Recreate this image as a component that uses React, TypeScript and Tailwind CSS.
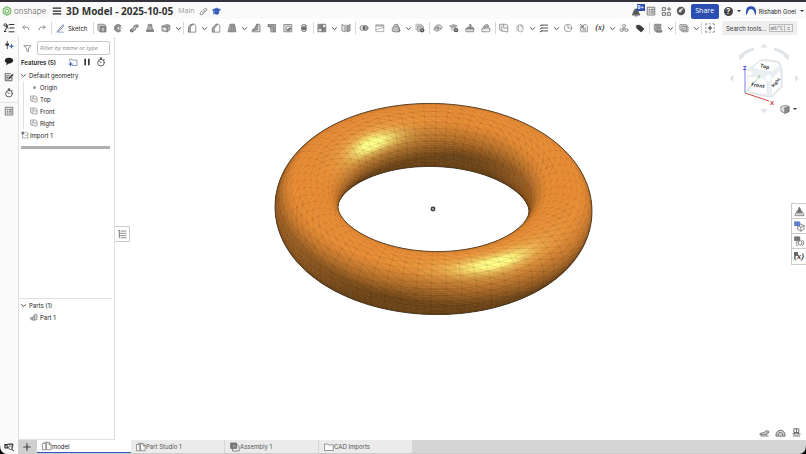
import React from "react";
import type { ReactNode } from "react";

/* ---------- icons ---------- */

type IconProps = { children: ReactNode; size?: string };

function Icon({ children, size = "size-3" }: IconProps) {
  return (
    <svg viewBox="0 0 12 12" className={`${size} shrink-0`} fill="none" stroke="#737373" strokeWidth="0.9" strokeLinejoin="round" strokeLinecap="round" aria-hidden="true">
      {children}
    </svg>
  );
}

const G = "#b4b4b4";

const icons: Record<string, ReactNode> = {
  undo: <path d="M4.2 3 2.2 5l2 2M2.4 5H7q2.5 0 2.5 3.2" stroke="#8a8a8a" strokeWidth="1.1" />,
  redo: <path d="M7.8 3l2 2-2 2M9.600 5H5Q2.500 5 2.500 8.200" stroke="#8a8a8a" strokeWidth="1.1" />,
  pencil: (
    <>
      <path d="M2.500 8.800 8.300 2l1.300 1.200L4 9.500l-2 .6z" stroke="#55657f" />
      <path d="M1.500 11h8" stroke="#7b94c9" />
    </>
  ),
  extrude: (
    <>
      <path d="M1.500 1.500h7.500l1.800 1.800v7.500H3.500L1.500 9z" fill="#d5d5d5" />
      <path d="M4 4h6.200v6.200H4z" fill="#8b8b8b" />
      <path d="M6 6h2.500v4H6z" fill="#bdbdbd" stroke="none" />
    </>
  ),
  revolve: (
    <>
      <path d="M9.500 3.200A4.500 4.500 0 1 0 9.500 9.200L7.500 7.400a1.700 1.700 0 1 1 0-2.400z" fill="#9a9a9a" />
      <path d="M4.500 3.500a3.400 3.400 0 0 0 0 5M7.500 6.200h2.700" />
    </>
  ),
  sweep: (
    <>
      <path d="M1.500 9.200c0-3.400 4-1.400 4-4 0-3.200 3-3 5-2.800v2.600c-2.500-.2-2 .2-2.200 1.800-.4 2.800-3.600 1.600-3.800 3.400z" fill={G} />
      <ellipse cx="3" cy="9.600" rx="1.700" ry="1.200" fill="#8a8a8a" />
      <ellipse cx="9.800" cy="3.600" rx="1" ry="1.400" fill="#ddd" />
    </>
  ),
  loft: (
    <>
      <path d="M4 2.500h4c0 3 .8 4.500 2.200 6.500H1.800C3.200 7 4 5.500 4 2.500z" fill={G} />
      <ellipse cx="6" cy="2.500" rx="2" ry="1" fill="#ddd" />
      <path d="M1.800 9v1.200h8.400V9z" fill="#888" />
    </>
  ),
  thicken: (
    <>
      <path d="M1.500 3.800 7 1.800 10.500 2.800v5.500L7.500 10.500l-6-1z" fill={G} />
      <path d="M1.500 3.800l6 1v5.700M7.500 4.800 10.500 2.800" />
      <path d="M3 5.800l3 .5v2.500l-3-.5z" fill="#eee" stroke="none" />
    </>
  ),
  fillet: (
    <>
      <path d="M2 10.500V6.500C2 4 3.500 1.500 6.500 1.500H9.200l1.300 1.300v7.700z" fill="#fff" />
      <path d="M2 6.500C2 4 3.500 1.500 6.500 1.500H8C5 2.600 4 4.500 4 7v3.500H2z" fill={G} />
    </>
  ),
  chamfer: (
    <>
      <path d="M2 10.500V6l4-4.500h3.200l1.300 1.300v7.700z" fill="#fff" />
      <path d="M2 6l4-4.500h2L4 6.500v4H2z" fill={G} />
    </>
  ),
  draft: (
    <>
      <path d="M4 1.500h5L10.800 10.500H1.500z" fill="#9c9c9c" />
      <path d="M5.800 1.500 4.500 10.500M7.800 1.500l.2 9" stroke="#858585" />
    </>
  ),
  rib: (
    <>
      <path d="M7.500 1.500h2.500l.8 1v8H1.500V8l3.500-1z" fill="#d5d5d5" />
      <path d="M7.500 1.500v6.500L2.500 9z" fill="#999" />
    </>
  ),
  shell: (
    <>
      <path d="M1.800 1.800h8.400v8.700H7.500V4.500H1.800z" fill="#a5a5a5" />
      <path d="M1.800 1.800v2.700h3.200v6h5.200" />
      <path d="M5 4.500h2.500v6H5z" fill="#ececec" />
      <path d="M5 6.500h2.500M5 8.500h2.500" />
    </>
  ),
  hole: (
    <>
      <path d="M1.500 1.800h9v8.700h-9z" fill="#dcdcdc" />
      <circle cx="6.300" cy="6.500" r="2.800" fill="#f5f5f5" />
      <path d="M4.300 8.500A2.800 2.800 0 0 0 9 5.800L6.300 6.300z" fill="#777" stroke="none" />
    </>
  ),
  thread: (
    <>
      <path d="M3.500 3v6.500c0 1.200 5 1.200 5 0V3z" fill="#d2d2d2" />
      <ellipse cx="6" cy="3" rx="2.500" ry="1.200" fill="#eee" />
      <path d="M3.500 5.300h5v2.600h-5z" fill="#666" />
    </>
  ),
  pattern: (
    <>
      <path d="M1.500 1.500h9v9h-9z" fill="#8a8a8a" />
      <path d="M6.800 2h3.200v3.500H6.800zM2 6.700h3.700V10H2z" fill="#e2e2e2" stroke="none" />
      <path d="M6.200 1.500v9M1.500 6.200h9" stroke="#666" />
    </>
  ),
  mirror: (
    <>
      <path d="M1.500 2 4.800 3.500v7L1.500 9.500z" fill="#e5e5e5" />
      <path d="M10.500 2 7.200 3.500v7l3.300-1z" fill="#a0a0a0" />
      <path d="M6 1.500v9" stroke="#999" />
    </>
  ),
  boolean: (
    <>
      <circle cx="4.200" cy="6" r="3" fill="#e2e2e2" />
      <circle cx="7.800" cy="6" r="3" fill="#a5a5a5" />
      <path d="M6 3.700a3 3 0 0 1 0 4.600 3 3 0 0 1 0-4.600z" fill="#555" />
    </>
  ),
  split: (
    <>
      <path d="M1.500 2.500h9v7.800h-9z" fill="#fff" stroke="#9b9b9b" />
      <path d="M1.500 2.500h9v1.200h-9z" fill="#d5d5d5" stroke="#9b9b9b" />
      <path d="M1.500 8 10.500 5" stroke="#999" strokeDasharray="1.200 1" />
    </>
  ),
  transform: (
    <>
      <path d="M2 5.500 6 3.800l4 1.200v4.800l-3.500 1L2 10z" fill="#c2c2c2" />
      <path d="M3 4c.5-2 3-3 4-1.800M8.500 1.500 7 2.600l1.600 1.200M9 7l1.800 2-1.500 2" stroke="#555" />
    </>
  ),
  deletePart: (
    <>
      <path d="M1.500 1.500h6.500v6.500H1.500z" fill="#d5d5d5" stroke="#aaa" />
      <path d="M3.500 3.500h6.500v6.500H3.500z" fill="#c0c0c0" stroke="#999" />
      <circle cx="8.700" cy="8.800" r="2.500" fill="#444" stroke="none" />
      <path d="M7.900 8l1.600 1.600M9.500 8 7.900 9.600" stroke="#fff" strokeWidth=".7" />
    </>
  ),
  modifyFillet: (
    <>
      <path d="M1 7.500C1.500 4 3.800 2 6.500 2S11 3.800 11 6L7.500 7 5 10z" fill="#cecece" stroke="#999" />
      <path d="M2.500 8.500V6.500L5.500 4M6 9.500v-4M5 6.500l1-1.300 1 1.300M8 9l2-2.500" />
    </>
  ),
  deleteFace: (
    <>
      <path d="M1 3.500 5.500 1.800l4.500 1.700L6.500 6z" fill="#a8a8a8" stroke="#999" />
      <path d="M3 5l3.500 1.200V10L3 8z" fill="#d8d8d8" stroke="#aaa" />
      <circle cx="8.500" cy="8.600" r="2.500" fill="#444" stroke="none" />
      <path d="M7.700 7.800l1.600 1.600M9.300 7.800 7.700 9.400" stroke="#fff" strokeWidth=".7" />
    </>
  ),
  moveFace: (
    <>
      <path d="M1.500 6.800h9v3.700h-9z" fill="#e2e2e2" />
      <path d="M1.500 6.800 4 4.800h5l1.500 2z" fill="#999" />
      <path d="M6.300 5.500V1.800M5 3 6.300 1.500 7.600 3" stroke="#555" />
    </>
  ),
  replaceFace: (
    <>
      <path d="M1.500 7h9v3.500h-9z" fill="#fff" />
      <path d="M1.500 7 4 5h5l1.500 2M3 4.500C4 2 7 1.500 8.500 2.300L9 4.500C7 3.500 5.500 4 4.500 5.500z" fill="#cdcdcd" />
    </>
  ),
  plane: (
    <>
      <path d="M1.200 1.500h7.300l2 1.800v7.500l-7.300-1.300-2-1z" fill="#f4f4f4" stroke="#808080" />
      <path d="M5.500 1.500v4.500h5M3.300 3.500v6" stroke="#8a8a8a" />
    </>
  ),
  helix: (
    <>
      <path d="M4 3.500v6c0 1.400 5.500 1.400 5.500 0V4L7.800 2.200H5.500C4.500 2.200 4 2.600 4 3.500z" fill="#f5f5f5" stroke="#999" />
      <path d="M2.500 4v5.500M7.500 2.500v2H9" stroke="#999" />
    </>
  ),
  curve: <path d="M3.500 2.500h7M3.500 6h7M3.500 9.500h7M1.500 3.500 3.500 2.500M1.500 7l2-1M1.500 10.500l2-1" stroke="#555" strokeWidth="1.200" />,
  clock: (
    <>
      <circle cx="6" cy="6" r="4.500" fill="#f8f8f8" stroke="#888" />
      <path d="M6 3V6.200h2.700" stroke="#888" />
    </>
  ),
  importPart: (
    <>
      <path d="M2 4.500v6h8.300V3.800L8.300 1.800H6.500" fill="#f2f2f2" stroke="#888" />
      <path d="M1.500 1.500 5 4.800M5 2.500v2.500H2.500" stroke="#444" />
      <path d="M5 6.200h3v2.500H5z" fill="#d5d5d5" stroke="#999" />
    </>
  ),
  composite: (
    <>
      <circle cx="6" cy="3.200" r="1.800" fill="#f2f2f2" stroke="#888" />
      <circle cx="3.200" cy="8.500" r="2" fill="#e2e2e2" stroke="#888" />
      <circle cx="8.800" cy="8.500" r="2" fill="#e2e2e2" stroke="#888" />
      <path d="M6 5v2M6 6.500 4.800 7.200M6 6.500l1.200.7" stroke="#888" />
    </>
  ),
  tag: <path d="M2 2.800h3.800l5 4.200-3.300 3.800L2.300 6.500z" fill="#3c3c3c" stroke="#3c3c3c" />,
  frame: (
    <>
      <path d="M2 1.500h7.500v2.500H5v1.500h4.500v2H5V9h5v1.800H3.800L2 9z" fill="#a0a0a0" />
      <path d="M5 10.800h5.500V8.500" />
    </>
  ),
  sheet: (
    <>
      <path d="M1.500 2h7L10.800 4v6.500H4L1.500 8.500z" fill="#dedede" />
      <path d="M4 4h5v4.800H4zM5 7.800l3-2.800" />
    </>
  ),
  addCustom: (
    <>
      <path d="M1 3V1h2M5 1h2M9 1h2v2M11 5v2M11 9v2H9M7 11H5M3 11H1V9M1 7V5" stroke="#666" strokeLinecap="butt" />
      <path d="M6 4v4M4 6h4" stroke="#333" strokeWidth="1.300" />
    </>
  ),
  featureTree: (
    <>
      <circle cx="2.300" cy="3" r="1.300" stroke="#333" />
      <path d="M6.500 2.500H11M7 6h4M6 9.800h5M3.300 4 5.200 6.200M5 3 1.500 9.500M1.500 9.500h1.500" stroke="#333" strokeWidth="1" />
    </>
  ),
  insert: (
    <>
      <path d="M4 1.500v9M2.600 4.500h2.800v2H2.600z" stroke="#333" fill="#333" />
      <path d="M9 5.500v4M7 7.500h4" stroke="#2f57b5" strokeWidth="1.200" />
    </>
  ),
  comment: <path d="M6 2C3 2 1 3.500 1 5.500 1 7 2 8 3.200 8.500L2.500 11 6 9c3 0 5-1.500 5-3.500S9 2 6 2z" fill="#222" stroke="none" />,
  notes: (
    <>
      <path d="M9.500 6.500v4h-8v-8.500h6" stroke="#333" />
      <path d="M3 4.500h3.500M3 6.500h2M3 8.500h1.500" stroke="#333" />
      <path d="M5.500 8.500 6 6.800 10 2.500l1.200 1L7 8z" fill="#333" stroke="#333" strokeWidth=".5" />
    </>
  ),
  timer: (
    <>
      <circle cx="6" cy="6.800" r="4" stroke="#333" />
      <path d="M5 1.300h2M6 1.300v1.500M6 6.800 4.500 5.300M9.300 2.800l.8.800" stroke="#333" strokeWidth="1.100" />
    </>
  ),
  table: (
    <>
      <path d="M2 1.500h8.500v9.300H2z" stroke="#555" />
      <path d="M3.500 4h1M6 4h3M3.500 6.200h1M6 6.200h3M3.500 8.400h1M6 8.400h3" stroke="#555" strokeWidth="1.100" />
    </>
  ),
  binoculars: (
    <>
      <path d="M1 3h4l1-.5h4.500v2.500M1 3v4h3.500V5.500M2 4.500h2" fill="none" stroke="#333" strokeWidth="1.300" />
      <circle cx="7.800" cy="6.800" r="2.200" stroke="#333" />
      <path d="M9.500 8.500l1.800 2" stroke="#333" strokeWidth="1.300" />
    </>
  ),
  funnel: <path d="M1.500 2.200h9L7.200 6.300v4L4.800 9V6.300z" stroke="#666" />,
  folderPlus: (
    <>
      <path d="M2 5V2.800h3L6 3.800h4.800v6.400H5.500" stroke="#6d7f9f" />
      <path d="M3.200 6.500v4M1.200 8.500h4" stroke="#2f57b5" strokeWidth="1.200" />
    </>
  ),
  pause: <path d="M3.800 2v8M8.200 2v8" stroke="#333" strokeWidth="2" strokeLinecap="butt" />,
  part: (
    <>
      <path d="M1.500 7h3V4.500h2V2.500L8 1.500l2.500 1V10l-4 .8-5-.8z" fill="#cfcfcf" stroke="#777" />
      <path d="M6.500 4.500v6M1.500 7l2.500 1v2.500" stroke="#777" />
    </>
  ),
  studio: (
    <>
      <path d="M1 3h3.500v7.500H1zM5.800 2h3L11 4v6.500H5.800z" fill="#f6f6f6" stroke="#777" />
      <path d="M2.500 1.500h4M8.500 2v2.500H11" stroke="#777" />
    </>
  ),
  assembly: (
    <>
      <path d="M3.500 3.500H9L11 5.500v5.300H3.500z" fill="#eee" stroke="#666" />
      <path d="M1 1.200h7v6.500H1z" fill="#777" stroke="#666" />
      <path d="M3.500 3.500h3v3h-3z" fill="#999" stroke="none" />
    </>
  ),
  folder: <path d="M1 2.500h3.500L5.500 3.500h5.700v6.700H1z" stroke="#777" fill="#fafafa" />,
  appearance: (
    <>
      <path d="M6 1.500 8.500 7h-5z" fill="#666" />
      <path d="M3 6 1 10.500h10L9 6M3 8.500h6" stroke="#777" />
    </>
  ),
  display: (
    <>
      <path d="M7.500 3.500 11 5v4L7.500 11 4 9V5zM4 5l3.500 1.800L11 5M7.500 6.800V11" fill="#fff" stroke="#777" />
      <path d="M.8 1h5.500v4H.8z" fill="#5f82d0" stroke="#4a6fc2" />
    </>
  ),
  config: (
    <>
      <path d="M3.500 5.500C2.500 5.500 3 8 2 8c1 0 .5 2.800 1.500 2.800M9.500 4.500c1 0 .5 2.500 1.500 3-1 .2-.5 3-1.500 3M5 6l1.800-1L8.600 6v3L6.800 10 5 9z" stroke="#666" />
      <path d="M.8 1h5.500v3.800H.8z" fill="#777" stroke="#666" />
    </>
  ),
  listToggle: <path d="M2 2h1.500M5 2.500h5.800M5 5.200h5.800M5 8h5.800M5 10.500h5.800M2.800 2v8.500M2.800 5.200H4M2.800 8H4" stroke="#666" />,
  scale: <path d="M1.500 8.500h7v-2h2V4.500L8 4 5.500 6l-4 1zM2 9.800h8" fill="#ccc" stroke="#666" />,
  protractor: <path d="M1 9.500C1 5.800 3 3.500 6 3.500s5 2.300 5 6zM3.500 9C3.500 7 4.500 6 6 6s2.500 1 2.500 3" fill="#d5d5d5" stroke="#555" />,
  mass: <path d="M3.500 2h5v4h-5zM6 2v4M2 7.500h8M2.500 9.800h7M4 6v1.500M8 6v1.500" stroke="#555" />,
  chevron: <path d="M2.500 4.500 6 8 9.500 4.500" stroke="#444" strokeWidth="1.700" />,
  importRow: (
    <>
      <path d="M2.500 4.500v6h8V3.500l-1.800-1.500H6.500" fill="#fff" stroke="#777" />
      <path d="M1.500 1.500h3v3h-3z" fill="#777" stroke="#777" />
      <path d="M6 5.500l1.500 2L10 4" stroke="#999" />
    </>
  ),
};

/* ---------- torus mesh ---------- */

const CX = 433.5;
const CY = 209;
const MAJOR = 127;
const MINOR = 31.5;
const ELEV = 0.622;
const ROLL = 0.026;

type Vec = [number, number, number];

function rotate([x, y, z]: Vec): Vec {
  // y runs away from the eye in the ring's plane, z along the ring's axis
  const up = y * Math.sin(ELEV) + z * Math.cos(ELEV);
  const toward = z * Math.sin(ELEV) - y * Math.cos(ELEV);
  return [x * Math.cos(ROLL) + up * Math.sin(ROLL), up * Math.cos(ROLL) - x * Math.sin(ROLL), toward];
}

function normalAt(u: number, v: number): Vec {
  return rotate([Math.cos(u) * Math.cos(v), Math.sin(u) * Math.cos(v), Math.sin(v)]);
}

function pointAt(u: number, v: number): string {
  const d = MAJOR + MINOR * Math.cos(v);
  const [x, y] = rotate([d * Math.cos(u), d * Math.sin(u), MINOR * Math.sin(v)]);
  return `${(CX + x).toFixed(2)} ${(CY - y).toFixed(2)}`;
}

function wrap(a: number): number {
  return Math.atan2(Math.sin(a), Math.cos(a));
}

// surface parameters nearest to a screen position on the visible side
function locate(sx: number, sy: number): [number, number] {
  let best: [number, number] = [0, 0];
  let dist = 1e9;
  for (let i = 0; i < 180; i++) {
    for (let j = 0; j < 90; j++) {
      const u = (i / 180) * 2 * Math.PI;
      const v = (j / 90) * 2 * Math.PI;
      if (normalAt(u, v)[2] < 0) continue;
      const [px, py] = pointAt(u, v).split(" ").map(Number);
      const d = (px - sx) ** 2 + (py - sy) ** 2;
      if (d < dist) {
        dist = d;
        best = [u, v];
      }
    }
  }
  return best;
}

const glints = [locate(373, 143), locate(495, 262)];

function shade(u: number, v: number): string {
  const n = normalAt(u, v);
  const dot = (l: Vec) => Math.max(0, n[0] * l[0] + n[1] * l[1] + n[2] * l[2]);
  const k = Math.min(1, 1.02 * dot([0.46, 0.66, 0.59]) + 0.46 * dot([-0.8, 0.59, 0.1]));
  let spec = 0;
  for (const [gu, gv] of glints) {
    const du = wrap(u - gu);
    const dv = wrap(v - gv);
    spec += 0.9 * Math.exp(-((du / 0.27) ** 2) - (dv / 0.26) ** 2) + 0.25 * Math.exp(-((du / 0.5) ** 2) - (dv / 0.5) ** 2);
  }
  const base = [108 + 124 * k, 68 + 72 * k, 24 + 28 * k];
  const s = Math.min(1, spec);
  const c = [base[0] + (255 - base[0]) * s, base[1] + (254 - base[1]) * s, base[2] + (135 - base[2]) * s];
  return `rgb(${c.map(Math.round).join(",")})`;
}

function buildFaces() {
  const U = 144;
  const V = 80;
  const faces: { d: string; fill: string; z: number }[] = [];
  for (let i = 0; i < U; i++) {
    for (let j = 0; j < V; j++) {
      const u0 = (i / U) * 2 * Math.PI;
      const u1 = ((i + 1) / U) * 2 * Math.PI;
      const v0 = (j / V) * 2 * Math.PI;
      const v1 = ((j + 1) / V) * 2 * Math.PI;
      const um = (u0 + u1) / 2;
      const vm = (v0 + v1) / 2;
      const z = normalAt(um, vm)[2];
      if (z < -0.1) continue;
      faces.push({ d: `M${pointAt(u0, v0)}L${pointAt(u1, v0)}L${pointAt(u1, v1)}L${pointAt(u0, v1)}Z`, fill: shade(um, vm), z });
    }
  }
  return faces.sort((a, b) => a.z - b.z);
}

// mesh edges; those seen edge-on are kept apart so that they can be drawn fainter
function buildWires(): [string, string] {
  const U = 64;
  const V = 30;
  let facing = "";
  let grazing = "";
  for (let i = 0; i < U; i++) {
    for (let j = 0; j < V; j++) {
      const u0 = (i / U) * 2 * Math.PI;
      const u1 = ((i + 1) / U) * 2 * Math.PI;
      const v0 = (j / V) * 2 * Math.PI;
      const v1 = ((j + 1) / V) * 2 * Math.PI;
      const z = normalAt((u0 + u1) / 2, (v0 + v1) / 2)[2];
      if (z < 0) continue;
      const d = `M${pointAt(u1, v0)}L${pointAt(u0, v0)}L${pointAt(u0, v1)}L${pointAt(u1, v0)}`;
      if (z > 0.6) facing += d;
      else grazing += d;
    }
  }
  return [facing, grazing];
}

function buildRim(side: number): string {
  const pts: string[] = [];
  for (let i = 0; i < 240; i++) {
    const u = (i / 240) * 2 * Math.PI;
    // tube angle at which the normal is square to the eye
    const v = Math.atan2(Math.sin(u) * Math.cos(ELEV), Math.sin(ELEV)) + (side > 0 ? 0 : Math.PI);
    pts.push(pointAt(u, v));
  }
  return `M${pts.join("L")}Z`;
}

const faces = buildFaces();
const [facingWires, grazingWires] = buildWires();
const rims = buildRim(1) + buildRim(-1);

function Torus() {
  return (
    <svg viewBox="115 37 691 403" className="size-full" role="img" aria-label="Torus model">
      <clipPath id="torus-rim">
        <path d={rims} clipRule="evenodd" />
      </clipPath>
      <g clipPath="url(#torus-rim)">
        {faces.map((f, i) => (
          <path key={i} d={f.d} fill={f.fill} stroke={f.fill} strokeWidth="0.6" />
        ))}
        <path d={facingWires} fill="none" stroke="#3d2405" strokeOpacity="0.36" strokeWidth="0.3" />
        <path d={grazingWires} fill="none" stroke="#3d2405" strokeOpacity="0.2" strokeWidth="0.3" />
      </g>
      <path d={rims} fill="none" stroke="#4a4031" strokeWidth="0.9" />
      <circle cx="433" cy="209" r="1.900" fill="#999" stroke="#333" strokeWidth="1.100" />
    </svg>
  );
}

/* ---------- view cube ---------- */

function ViewCube() {
  return (
    <svg viewBox="728 42 72 74" className="h-[74px] w-[72px]" role="img" aria-label="View cube">
      <g fill="#dfe3e9">
        <path d="M764 43.500l3.500 4h-7zM764 113.500l-3.500-4.500h7zM729.500 78.500l4-3.500v7zM799 78.500l-4-3.500v7z" />
      </g>
      <path d="M741 56q5-5 13-7M774 49q8 2 13 7" stroke="#dfe3e9" strokeWidth="3" fill="none" />
      <path d="M738.500 54.500l1 5.500 5-3zM789.500 54.500l-1 5.500-5-3z" fill="#dfe3e9" />
      <path d="M748 70l13-10q12-1 19 3l2 6v18l-10 10q-14-1-23-5z" fill="#eceff3" stroke="#d5dae1" strokeWidth="0.800" strokeLinejoin="round" />
      <path d="M752 68l8-7q9-1 18 2l2 2-8 7q-10 0-20-4z" fill="#fff" stroke="#dde1e7" strokeWidth="0.600" />
      <path d="M748 76q10 0 19 4v15q-10-1-19-4z" fill="#fff" stroke="#dde1e7" strokeWidth="0.600" />
      <path d="M771.500 79l8.500-9 1 3v13l-9.500 10z" fill="#fff" stroke="#dde1e7" strokeWidth="0.600" />
      <circle cx="768.500" cy="78" r="3" fill="#fff" />
      <circle cx="749.500" cy="73" r="2.500" fill="#fff" />
      <path d="M745 93V70" stroke="#7d7de8" strokeWidth="1" />
      <path d="M745 93l24 8" stroke="#d24a4a" strokeWidth="1" />
      <path d="M745 93l14-16" stroke="#77c477" strokeWidth="0.600" />
      <g fontFamily="Open Sans, sans-serif" fontWeight="700" fill="#333" fontSize="5">
        <text x="760" y="68" transform="rotate(14 764 67)">Top</text>
        <text x="751" y="87" fontSize="5" transform="rotate(9 757 86)">Front</text>
        <text x="771" y="84" fontSize="4" transform="rotate(-50 776 83)">Right</text>
        <text x="743" y="69.500" fontSize="6" fill="#4040c8">Z</text>
        <text x="770" y="104.500" fontSize="6" fill="#d03c3c">X</text>
        <text x="758" y="78" fontSize="4" fontWeight="400" fill="#5cb85c">Y</text>
      </g>
    </svg>
  );
}

/* ---------- pieces ---------- */

function ToolButton({ name, label }: { name: string; label?: string }) {
  return (
    <button type="button" aria-label={label ?? name} className="flex h-4 w-4 shrink-0 items-center justify-center">
      <Icon size="size-[10px]">{icons[name]}</Icon>
    </button>
  );
}

function Chevron() {
  return (
    <button type="button" aria-label="More" className="flex h-4 w-2 shrink-0 items-center justify-center">
      <Icon size="size-[7px]">{icons.chevron}</Icon>
    </button>
  );
}

function Separator() {
  return (
    <span className="flex h-3 w-0.5 shrink-0 justify-center">
      <span className="h-3 w-px bg-[#d8d8d8]" />
    </span>
  );
}

const tools =
  "extrude revolve sweep loft thicken v | fillet v chamfer draft v rib shell hole thread | pattern v mirror | boolean split transform v deletePart | modifyFillet deleteFace moveFace replaceFace | plane helix v curve v clock importPart var v composite tag | frame v | sheet v | addCustom".split(" ");

function Toolbar() {
  return (
    <div role="toolbar" className="flex h-[18px] shrink-0 items-center">
      <ToolButton name="undo" />
      <ToolButton name="redo" />
      <Separator />
      <button type="button" className="flex w-10 shrink-0 items-center gap-0.5 pl-1 text-[6px] text-[#222]">
        <Icon size="size-[10px]">{icons.pencil}</Icon>
        Sketch
      </button>
      <Separator />
      {tools.map((t, i) => {
        if (t === "v") return <Chevron key={i} />;
        if (t === "|") return <Separator key={i} />;
        if (t === "var")
          return (
            <button key={i} type="button" className="w-4 shrink-0 text-center font-['Liberation_Serif',serif] text-[8px] font-bold italic text-[#444]">
              (x)
            </button>
          );
        return <ToolButton key={i} name={t} />;
      })}
      <button type="button" className="mr-[9px] ml-auto flex h-[14px] w-[75px] shrink-0 items-center bg-[#efefef] pl-1 text-[6px] whitespace-nowrap text-[#333]">
        Search tools...
        <span className="ml-0.5 flex h-2 items-center border border-[#bbb] px-px text-[5px] leading-none text-[#666]">alt/⌥</span>
        <span className="flex h-2 items-center border border-l-0 border-[#bbb] px-0.5 text-[5px] leading-none text-[#666]">c</span>
      </button>
    </div>
  );
}

function Header() {
  return (
    <header className="flex h-[17px] shrink-0 items-center bg-[#fafafa] pt-px">
      <div className="flex w-[49px] shrink-0 items-center gap-0.5 pl-0.5">
        <svg viewBox="0 0 12 12" className="size-[10px]" fill="none" stroke="#79b96a" strokeWidth="1.4" aria-hidden="true">
          <path d="M6 .9 10.500 3.500v5L6 11.100 1.500 8.500v-5z" />
          <path d="M6 3.500 8.200 4.800v2.500L6 8.500 3.800 7.300V4.800z" />
        </svg>
        <span className="text-[8px] font-light text-[#666]">onshape</span>
      </div>
      <button type="button" aria-label="Menu" className="flex w-4 shrink-0 justify-center">
        <Icon size="size-[10px]">
          <path d="M1.500 2.500h9M1.500 6h9M1.500 9.500h9" stroke="#222" strokeWidth="1.500" />
        </Icon>
      </button>
      <h1 className="pl-px font-['Open_Sans'] text-[10px] font-bold whitespace-nowrap text-[#333]">3D Model - 2025-10-05</h1>
      <span className="pl-[5px] font-['Open_Sans'] text-[7px] text-[#999]">Main</span>
      <button type="button" aria-label="Share link" className="ml-[5px]">
        <Icon size="size-[9px]">
          <path d="M5 7.500 8 4.500M5.500 4.200 7.500 2.200a1.700 1.700 0 0 1 2.400 2.400l-2 2M6.500 8l-2 2A1.700 1.700 0 0 1 2 7.500l2-2" stroke="#555" />
        </Icon>
      </button>
      <button type="button" aria-label="Learning center" className="ml-1">
        <Icon size="size-[9px]">
          <path d="M1 3.800 6 1.500l5.500 2L6.500 6zM3.500 5.500v3c1.500 1.500 4.500 1.500 5.500 0V5M2 4.500v5" fill="#2f57b5" stroke="#2f57b5" />
        </Icon>
      </button>
      <div className="ml-auto flex items-center">
        <button type="button" aria-label="Notifications" className="relative flex w-[15px] justify-center">
          <Icon size="size-[11px]">
            <path d="M1.500 9.500c1.500-1.500 1-5.500 4-6.500 3 1 2.500 5 4 6.500zM4.500 10.800h2" fill="#555" stroke="#555" />
          </Icon>
          <span className="absolute -top-0.5 left-2 h-[7px] w-2 bg-[#2a4fb0] text-center text-[5px] leading-[7px] font-bold text-white">9+</span>
        </button>
        <button type="button" aria-label="Release notes" className="flex w-[15px] justify-center">
          <Icon size="size-[10px]">{icons.table}</Icon>
        </button>
        <button type="button" aria-label="Apps" className="flex w-[15px] justify-center">
          <Icon size="size-[11px]">
            <path d="M1.800 1.800h3v3h-3zM1.800 7.200h3v3h-3zM7.200 7.200h3v3h-3zM8.700 1.300v4M6.700 3.300h4" stroke="#555" />
          </Icon>
        </button>
        <button type="button" aria-label="Community" className="flex w-[15px] justify-center">
          <Icon size="size-[10px]">
            <circle cx="6" cy="6" r="5" fill="#555" stroke="none" />
            <path d="M3 6.500c1.500-3.500 4-4 6-3.500-1 1.500-2 1.500-2.500 3.500L5 8z" fill="#ddd" stroke="none" />
          </Icon>
        </button>
        <button type="button" className="ml-0.5 h-[15px] w-7 rounded-xs bg-[#2a4fb0] font-['Open_Sans'] text-[7px] text-white">Share</button>
        <button type="button" aria-label="Help" className="ml-[5px] flex items-center gap-1">
          <span className="flex size-[9px] items-center justify-center rounded-full bg-[#444] text-[7px] leading-none font-bold text-white">?</span>
          <span className="border-x-2 border-t-2 border-x-transparent border-t-[#333]" />
        </button>
        <button type="button" className="ml-1 flex items-center text-[6px] whitespace-nowrap text-[#222]">
          <svg viewBox="0 0 12 12" className="mr-0.5 size-3" aria-hidden="true">
            <path d="M1 10V6.500C1 3 3 1.200 6 1.200S11 3 11 6.500V10Q9.500 9 9 6.500 8.500 4 6 4T3 6.500Q2.500 9 1 10z" fill="#2a4fb0" />
          </svg>
          Rishabh Goel
          <span className="mr-0.5 ml-1 border-x-2 border-t-2 border-x-transparent border-t-[#333]" />
        </button>
      </div>
    </header>
  );
}

function Rail() {
  return (
    <nav className="flex w-[18px] shrink-0 flex-col items-center bg-[#fafafa]">
      <button type="button" aria-label="Feature list" className="flex h-[18px] items-center">
        <Icon>{icons.featureTree}</Icon>
      </button>
      {["insert", "comment", "notes", "timer"].map((n) => (
        <button key={n} type="button" aria-label={n} className="flex h-4 items-center">
          <Icon size="size-[10px]">{icons[n]}</Icon>
        </button>
      ))}
      <span className="mt-px w-full border-t border-[#e3e3e3]" />
      <button type="button" aria-label="Tables" className="flex h-4 items-center">
        <Icon size="size-[10px]">{icons.table}</Icon>
      </button>
      <button type="button" aria-label="Search" className="mt-auto mb-0.5">
        <Icon size="size-[10px]">{icons.binoculars}</Icon>
      </button>
    </nav>
  );
}

function Disclosure({ text }: { text: string }) {
  return (
    <button type="button" aria-expanded="true" className="flex h-3 items-center gap-0.5 pl-px text-[6px] text-[#222]">
      <Icon size="size-[7px]">{icons.chevron}</Icon>
      {text}
    </button>
  );
}

function FeaturePanel() {
  return (
    <aside className="flex w-[97px] shrink-0 flex-col border-r border-b border-l border-[#e0e0e0] text-[6px] text-[#222]">
      <div className="flex items-center gap-[5px] pt-1 pr-1 pl-1">
        <Icon size="size-[9px]">{icons.funnel}</Icon>
        <input
          type="text"
          aria-label="Filter by name or type"
          placeholder="Filter by name or type"
          className="h-[14px] min-w-0 flex-1 rounded-xs border border-[#c8c8c8] px-0.5 font-['Open_Sans'] text-[6px] italic outline-none placeholder:text-[#888]"
        />
      </div>
      <div className="flex h-[14px] items-center pl-0.5">
        <h2 className="flex-1 text-[6px] font-semibold text-[#222]">Features (5)</h2>
        <div className="flex gap-1 pr-2">
          <button type="button" aria-label="Add folder">
            <Icon size="size-[10px]">{icons.folderPlus}</Icon>
          </button>
          <button type="button" aria-label="Pause">
            <Icon size="size-[10px]">{icons.pause}</Icon>
          </button>
          <button type="button" aria-label="Rebuild time">
            <Icon size="size-[10px]">{icons.timer}</Icon>
          </button>
        </div>
      </div>
      <Disclosure text="Default geometry" />
      <ul className="ml-1 border-l border-[#e0e0e0] pl-[6px]">
        <li className="flex h-3 items-center gap-0.5">
          <span className="flex w-2 justify-center">
            <span className="size-[3px] rounded-full bg-[#999]" />
          </span>
          Origin
        </li>
        {["Top", "Front", "Right"].map((n) => (
          <li key={n} className="flex h-3 items-center gap-0.5">
            <Icon size="size-2">{icons.plane}</Icon>
            {n}
          </li>
        ))}
      </ul>
      <div className="flex h-3 items-center gap-px pl-0.5">
        <Icon size="size-2">{icons.importRow}</Icon>
        Import 1
      </div>
      <div className="mt-[5px] mr-1 ml-0.5 h-[3px] bg-[#b0b0b0]" />
      <section className="mt-auto mr-0.5 h-[141px] border-t border-[#e0e0e0]">
        <Disclosure text="Parts (1)" />
        <div className="flex h-3 items-center gap-0.5 pl-[11px]">
          <Icon size="size-2">{icons.part}</Icon>
          Part 1
        </div>
      </section>
    </aside>
  );
}

function Canvas() {
  return (
    <main className="relative min-w-0 flex-1">
      <Torus />
      <button type="button" aria-label="Toggle list" className="absolute top-[189px] left-0 flex h-4 w-[15px] items-center justify-center border border-l-0 border-[#ccc] bg-white">
        <Icon size="size-[10px]">{icons.listToggle}</Icon>
      </button>
      <div className="absolute top-[5px] right-[6px]">
        <ViewCube />
      </div>
      <button type="button" aria-label="Shading" className="absolute top-[67px] right-[9px] flex items-center gap-[3px]">
        <Icon size="size-[10px]">
          <path d="M1.500 3 7 1.500 10.800 3v6L6 11 1.500 9z" fill="#ddd" />
          <path d="M6 4.500 10.800 3v6L6 11z" fill="#888" />
        </Icon>
        <span className="border-x-2 border-t-2 border-x-transparent border-t-[#333]" />
      </button>
      <div className="absolute top-[166px] right-0 flex w-[15px] flex-col divide-y divide-[#ccc] border border-r-0 border-[#ccc] bg-white">
        {["appearance", "display", "config"].map((n) => (
          <button key={n} type="button" aria-label={n} className="flex h-[15px] items-center justify-center">
            <Icon size="size-[11px]">{icons[n]}</Icon>
          </button>
        ))}
        <button type="button" className="relative flex h-[15px] items-center justify-center font-['Liberation_Serif',serif] text-[9px] font-bold italic text-[#333]">
          (x)
          <span className="absolute top-[3px] left-0.5 size-1 bg-[#666]" />
        </button>
      </div>
      <div className="absolute right-1 bottom-0.5 flex gap-[5px]">
        {["scale", "protractor", "mass"].map((n) => (
          <button key={n} type="button" aria-label={n}>
            <Icon size="size-[11px]">{icons[n]}</Icon>
          </button>
        ))}
      </div>
    </main>
  );
}

function TabBar() {
  const tabs: [string, string][] = [
    ["studio", "Part Studio 1"],
    ["assembly", "Assembly 1"],
    ["folder", "CAD Imports"],
  ];
  return (
    <div role="tablist" className="flex h-[14px] shrink-0 border-b border-[#ccc] bg-[#d5d5d5] text-[6px] text-[#555]">
      <button type="button" aria-label="Add tab" className="flex w-[19px] shrink-0 items-center justify-center bg-[#cfcfcf] pr-0.5">
        <Icon size="size-[10px]">
          <path d="M6 2v8M2 6h8" stroke="#444" strokeWidth="1.400" />
        </Icon>
      </button>
      <button type="button" role="tab" aria-selected="true" className="flex w-[94px] shrink-0 items-center border-b border-[#2f57b5] bg-white pl-[5px] text-[#222]">
        <Icon size="size-[10px]">{icons.studio}</Icon>
        model
      </button>
      {tabs.map(([icon, label]) => (
        <button key={label} type="button" role="tab" aria-selected="false" className="flex w-[94px] shrink-0 items-center border-r border-[#d5d5d5] bg-[#ebebeb] pl-[5px]">
          <Icon size="size-[10px]">{icons[icon]}</Icon>
          {label}
        </button>
      ))}
    </div>
  );
}

export default function App() {
  return (
    <div className="relative flex h-screen flex-col overflow-hidden bg-white font-['Inter','Liberation_Sans',sans-serif]">
      <div className="h-0.5 shrink-0 bg-[#35313a]" />
      <Header />
      <div className="flex min-h-0 flex-1">
        <Rail />
        <div className="flex min-w-0 flex-1 flex-col">
          <Toolbar />
          <div className="flex min-h-0 flex-1">
            <FeaturePanel />
            <Canvas />
          </div>
          <TabBar />
        </div>
      </div>
      <svg viewBox="0 0 6 9" className="absolute bottom-0 left-0 h-[9px] w-[6px]" aria-hidden="true">
        <path d="M0 0q0 8 6 9H0z" />
      </svg>
      <svg viewBox="0 0 6 9" className="absolute right-0 bottom-0 h-[9px] w-[6px]" aria-hidden="true">
        <path d="M6 0q0 8-6 9h6z" />
      </svg>
    </div>
  );
}
